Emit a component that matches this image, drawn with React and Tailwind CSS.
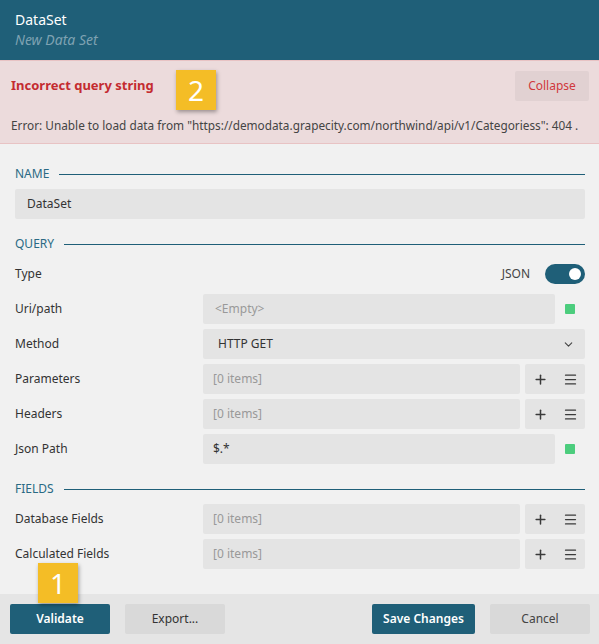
import { Plus, Menu, ChevronDown } from 'lucide-react';

const font = { fontFamily: '"Segoe UI", "Noto Sans", "Open Sans", sans-serif' };

const Section = ({ title }) => (
  <div className="flex items-center h-[20px] mt-[10px] mb-[5px]">
    <span className="text-[12px] text-[#2a6a84] uppercase mr-[10px]">{title}</span>
    <div className="flex-1 h-px bg-[#1f5f78]" />
  </div>
);

const Row = ({ label, children }) => (
  <div className="flex items-center h-[30px] mb-[5px]">
    <div className="w-[188px] text-[12px] text-[#333]">{label}</div>
    <div className="flex-1 flex items-center h-full">{children}</div>
  </div>
);

const Field = ({ children, muted, pl = 'pl-[10px]' }) => (
  <div className={`flex-1 h-full bg-[#e4e4e4] rounded-[2px] flex items-center ${pl} text-[12px] ${muted ? 'text-[#999]' : 'text-[#333]'}`}>
    {children}
  </div>
);

const Ok = () => (
  <div className="w-[30px] flex justify-center">
    <div className="w-[10px] h-[10px] bg-[#4ccd7d] rounded-[1px]" />
  </div>
);

const Collection = () => (
  <>
    <Field muted>[0 items]</Field>
    <div className="ml-[5px] w-[60px] h-full bg-[#e4e4e4] rounded-[2px] flex items-center justify-around text-[#3a3a3a]">
      <Plus size={15} strokeWidth={2.4} />
      <Menu size={15} strokeWidth={2} />
    </div>
  </>
);

const Badge = ({ n, className }) => (
  <div className={`absolute w-[40px] h-[40px] bg-[#f4bd26] text-white text-[28px] flex items-center justify-center shadow-[1px_2px_4px_rgba(0,0,0,0.35)] ${className}`}>
    {n}
  </div>
);

export default function App() {
  return (
    <div className="w-[599px] h-[644px] bg-[#f1f1f1] flex flex-col relative overflow-hidden" style={font}>
      {/* header */}
      <div className="h-[60px] bg-[#1f5f78] px-[15px] pt-[10px] shrink-0">
        <div className="text-white text-[14px] leading-[20px]">DataSet</div>
        <div className="text-[#7ea2b2] text-[14px] italic leading-[20px]">New Data Set</div>
      </div>

      {/* error banner */}
      <div className="h-[84px] bg-[#ecdbdc] border-t border-b border-[#e8c3c4] px-[11px] shrink-0 relative">
        <div className="flex items-center justify-between pt-[10px]">
          <span className="text-[13px] font-bold text-[#c42b30]">Incorrect query string</span>
          <button className="w-[74px] h-[30px] bg-[#e1d1d2] rounded-[2px] text-[12px] text-[#d0383c] mr-[-1px]">Collapse</button>
        </div>
        <div className="mt-[16px] text-[11.8px] text-[#444]">
          Error: Unable to load data from "https://demodata.grapecity.com/northwind/api/v1/Categoriess": 404 .
        </div>
        <Badge n="2" className="left-[176px] top-[9px]" />
      </div>

      {/* body */}
      <div className="flex-1 flex flex-col pl-[15px] pr-[14px] pt-[10px] min-h-0">
        <Section title="Name" />
        <div className="h-[30px] bg-[#e4e4e4] rounded-[2px] flex items-center pl-[12px] text-[12px] text-[#333] mb-[5px]">DataSet</div>

        <Section title="Query" />
        <Row label="Type">
          <div className="flex-1 flex items-center justify-end">
            <span className="text-[12px] text-[#444] mr-[15px]">JSON</span>
            <div className="w-[40px] h-[20px] rounded-full bg-[#1f5f78] flex items-center justify-end pr-[4px]">
              <div className="w-[12px] h-[12px] rounded-full bg-white" />
            </div>
          </div>
        </Row>
        <Row label="Uri/path">
          <Field muted pl="pl-[12px]">&lt;Empty&gt;</Field>
          <Ok />
        </Row>
        <Row label="Method">
          <Field pl="pl-[15px]">
            <span className="flex-1">HTTP GET</span>
            <ChevronDown size={13} className="mr-[10px] text-[#444]" />
          </Field>
        </Row>
        <Row label="Parameters"><Collection /></Row>
        <Row label="Headers"><Collection /></Row>
        <Row label="Json Path">
          <Field>$.*</Field>
          <Ok />
        </Row>

        <Section title="Fields" />
        <Row label="Database Fields"><Collection /></Row>
        <Row label="Calculated Fields"><Collection /></Row>
      </div>

      {/* footer */}
      <div className="h-[50px] bg-[#e5e5e5] shrink-0 flex items-center px-[10px] relative">
        <button className="w-[100px] h-[30px] bg-[#1f5f78] rounded-[2px] text-white text-[12px] font-semibold">Validate</button>
        <button className="w-[100px] h-[30px] bg-[#d9d9d9] rounded-[2px] text-[#333] text-[12px] ml-[15px]">Export...</button>
        <div className="flex-1" />
        <button className="w-[103px] h-[30px] bg-[#1f5f78] rounded-[2px] text-white text-[12px] font-semibold">Save Changes</button>
        <button className="w-[100px] h-[30px] bg-[#d9d9d9] rounded-[2px] text-[#444] text-[12px] ml-[15px] mr-[-1px]">Cancel</button>
        <Badge n="1" className="left-[38px] top-[-31px]" />
      </div>
    </div>
  );
}
